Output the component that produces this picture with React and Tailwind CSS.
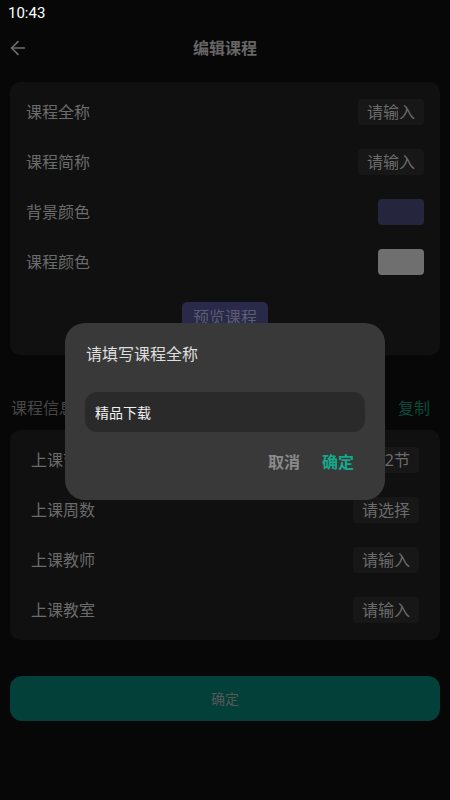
import { useState } from "react";
import { ArrowLeft } from "lucide-react";

const cjk = { fontFamily: '"Noto Sans", "Noto Sans CJK SC", sans-serif' };

function Pill({ children }) {
  return (
    <div className="h-[26px] px-[9px] rounded-[4px] bg-[#171717] flex items-center text-[16px] text-[#6b6b6b]">
      {children}
    </div>
  );
}

function Swatch({ color }) {
  return <div className={`w-[46px] h-[26px] rounded-[4px] ${color}`} />;
}

function Row({ label, children }) {
  return (
    <div className="h-[50px] flex items-center justify-between">
      <span className="text-[16px] text-[#6b6b6b]">{label}</span>
      {children}
    </div>
  );
}

export default function App() {
  const [name, setName] = useState("精品下载");

  return (
    <div className="w-[450px] h-[800px] bg-[#070707] relative overflow-hidden" style={cjk}>
      {/* status bar */}
      <div className="h-[26px] px-[8px] flex items-center">
        <span className="text-[15px] text-white" style={{ fontFamily: "Roboto, sans-serif" }}>
          10:43
        </span>
      </div>

      {/* nav */}
      <div className="h-[44px] flex items-center relative">
        <ArrowLeft size={22} strokeWidth={1.8} className="ml-[7px] text-[#6e6e6e]" />
        <div className="absolute inset-0 flex items-center justify-center text-[16px] font-bold text-[#666]">
          编辑课程
        </div>
      </div>

      <div className="px-[10px]">
        {/* card 1 */}
        <div className="mt-[12px] rounded-[10px] bg-[#101010] px-[16px] pt-[5px] pb-[24px]">
          <Row label="课程全称">
            <Pill>请输入</Pill>
          </Row>
          <Row label="课程简称">
            <Pill>请输入</Pill>
          </Row>
          <Row label="背景颜色">
            <Swatch color="bg-[#25253e]" />
          </Row>
          <Row label="课程颜色">
            <Swatch color="bg-[#6f6f6f]" />
          </Row>
          <div className="mt-[15px] flex justify-center">
            <div className="h-[29px] px-[11px] rounded-[5px] bg-[#29294a] flex items-center text-[16px] text-[#5c5c72]">
              预览课程
            </div>
          </div>
        </div>

        {/* section header */}
        <div className="mt-[38px] h-[30px] mb-[7px] flex items-center justify-between pl-[1px] pr-[10px]">
          <span className="text-[16px] text-[#474747]">课程信息</span>
          <span className="text-[16px] text-[#0c4a3d]">复制</span>
        </div>

        {/* card 2 */}
        <div className="rounded-[10px] bg-[#101010] pl-[21px] pr-[21px] py-[5px]">
          <Row label="上课节数">
            <Pill>第1-2节</Pill>
          </Row>
          <Row label="上课周数">
            <Pill>请选择</Pill>
          </Row>
          <Row label="上课教师">
            <Pill>请输入</Pill>
          </Row>
          <Row label="上课教室">
            <Pill>请输入</Pill>
          </Row>
        </div>

        <button className="mt-[36px] w-full h-[45px] rounded-[12px] bg-[#03403a] text-[14px] text-[#575757]">
          确定
        </button>
      </div>

      {/* dialog */}
      <div className="absolute inset-0 flex justify-center pt-[323px]">
        <div className="w-[320px] h-[177px] rounded-[20px] bg-[#393939] px-[20px] pt-[19px]">
          <div className="text-[16px] text-[#dedede] pl-[1px]">请填写课程全称</div>
          <input
            value={name}
            onChange={(e) => setName(e.target.value)}
            className="mt-[26px] w-full h-[40px] rounded-[12px] bg-[#2a2a2a] px-[10px] text-[14px] text-[#f0f0f0] outline-none"
            style={cjk}
          />
          <div className="mt-[18px] flex justify-end gap-[22px] pr-[11px]">
            <button className="text-[16px] font-bold text-[#8a8a8a]">取消</button>
            <button className="text-[16px] font-bold text-[#13a98b]">确定</button>
          </div>
        </div>
      </div>
    </div>
  );
}
